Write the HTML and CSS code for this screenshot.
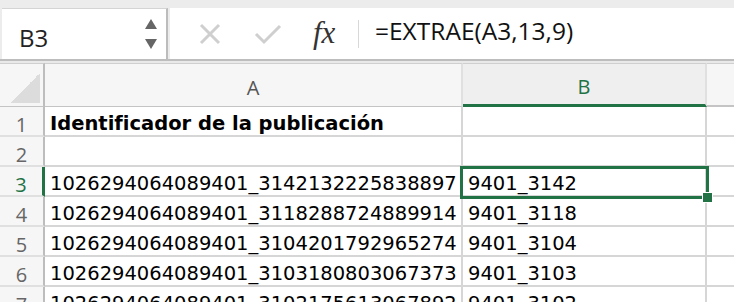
FILE: index.html
```html
<!DOCTYPE html>
<html lang="es">
<head>
    <meta charset="UTF-8">
    <title>EXTRAE</title>
    <link rel="stylesheet" href="styles.css">
</head>
<body>
    <div class="toolbar">
        <div class="name-box">
            <span class="cell-ref">B3</span>
            <div class="spinner">
                <svg width="14" height="12" viewBox="0 0 14 12"><polygon points="7,1 13,11 1,11" fill="#666"/></svg>
                <svg width="14" height="12" viewBox="0 0 14 12"><polygon points="1,1 13,1 7,11" fill="#666"/></svg>
            </div>
        </div>
        <div class="formula-bar">
            <div class="bar-icons">
                <svg class="icon-cancel" width="22" height="22" viewBox="0 0 22 22"><path d="M2 2 L20 20 M20 2 L2 20" stroke="#cfcfcf" stroke-width="3" fill="none"/></svg>
                <svg class="icon-ok" width="28" height="22" viewBox="0 0 28 22"><path d="M2 11 L10 19 L26 3" stroke="#cfcfcf" stroke-width="3" fill="none"/></svg>
                <span class="fx">fx</span>
            </div>
            <div class="formula">=EXTRAE(A3,13,9)</div>
        </div>
    </div>

    <div class="sheet">
        <div class="grid">
            <div class="corner"><span class="corner-tri"></span></div>
            <div class="col-head">A</div>
            <div class="col-head active">B</div>
            <div class="col-head rest"></div>

            <div class="row-head">1</div>
            <div class="cell bold">Identificador de la publicación</div>
            <div class="cell"></div>
            <div class="cell rest"></div>

            <div class="row-head">2</div>
            <div class="cell"></div>
            <div class="cell"></div>
            <div class="cell rest"></div>

            <div class="row-head active">3</div>
            <div class="cell">1026294064089401_3142132225838897</div>
            <div class="cell">9401_3142</div>
            <div class="cell rest"></div>

            <div class="row-head">4</div>
            <div class="cell">1026294064089401_3118288724889914</div>
            <div class="cell">9401_3118</div>
            <div class="cell rest"></div>

            <div class="row-head">5</div>
            <div class="cell">1026294064089401_3104201792965274</div>
            <div class="cell">9401_3104</div>
            <div class="cell rest"></div>

            <div class="row-head">6</div>
            <div class="cell">1026294064089401_3103180803067373</div>
            <div class="cell">9401_3103</div>
            <div class="cell rest"></div>

            <div class="row-head">7</div>
            <div class="cell">1026294064089401_3102175613067892</div>
            <div class="cell">9401_3102</div>
            <div class="cell rest"></div>
        </div>
        <div class="selection"><span class="handle"></span></div>
    </div>
</body>
</html>
```

FILE: styles.css
```css
body {
    margin: 0;
    width: 734px;
    height: 302px;
    overflow: hidden;
    background-color: #fff;
    font-family: 'Open Sans', 'Liberation Sans', sans-serif;
}
.toolbar {
    display: flex;
    height: 51px;
    padding-top: 8px;
    background-color: #ececec;
    border-bottom: 2px solid #bdbdbd;
}
.name-box {
    width: 166px;
    margin-left: 2px;
    display: flex;
    align-items: center;
    justify-content: space-between;
    background-color: #fff;
    border-top: 1px solid #d4d4d4;
    border-right: 2px solid #bcbcbc;
    box-sizing: border-box;
}
.cell-ref {
    font-size: 24px;
    color: #222;
    padding-left: 17px;
    padding-top: 6px;
}
.spinner {
    display: flex;
    flex-direction: column;
    gap: 8px;
    padding-right: 8px;
}
.spinner svg {
    display: block;
}
.formula-bar {
    flex: 1;
    display: flex;
    align-items: center;
    margin-left: 2px;
    background-color: #fff;
}
.bar-icons {
    display: flex;
    align-items: center;
    width: 189px;
    height: 28px;
    border-right: 1px solid #d8d8d8;
    box-sizing: border-box;
}
.icon-cancel {
    margin-left: 29px;
}
.icon-ok {
    margin-left: 33px;
}
.fx {
    margin-left: 31px;
    font-family: 'Liberation Serif', 'DejaVu Serif', serif;
    font-style: italic;
    font-size: 31px;
    color: #333;
    margin-top: -2px;
}
.formula {
    padding-left: 16px;
    font-size: 24.5px;
    color: #111;
    margin-top: -7px;
}
.sheet {
    position: relative;
    border-top: 2px solid #e9e9e9;
}
.grid {
    display: grid;
    grid-template-columns: 45px 418px 244px 27px;
    grid-template-rows: 44px repeat(7, 30px);
    height: 239px;
    overflow: hidden;
}
.corner, .col-head {
    background-color: #f6f6f6;
    border-top: 1px solid #cfcfcf;
    border-bottom: 1px solid #c4c4c4;
    box-sizing: border-box;
}
.corner {
    border-right: 2px solid #bdbdbd;
    position: relative;
}
.corner-tri {
    position: absolute;
    left: 10px;
    top: 9px;
    width: 30px;
    height: 30px;
    background: linear-gradient(to top left, #dcdcdc 50%, transparent 50%);
}
.col-head {
    display: flex;
    align-items: center;
    justify-content: center;
    font-size: 20px;
    color: #555;
    border-right: 2px solid #e0e0e0;
    padding-top: 4px;
}
.col-head.active {
    background-color: #efefef;
    color: #217346;
    border-bottom: 3px solid #217346;
}
.col-head.rest {
    border-right: none;
    border-bottom: 2px solid #c4c4c4;
}
.row-head {
    display: flex;
    align-items: center;
    justify-content: center;
    background-color: #f6f6f6;
    border-right: 2px solid #bdbdbd;
    border-bottom: 2px solid #e0e0e0;
    box-sizing: border-box;
    font-size: 20px;
    color: #666;
    padding-top: 6px;
}
.row-head.active {
    color: #217346;
    border-right: 3px solid #217346;
}
.cell {
    display: flex;
    align-items: center;
    padding-left: 5px;
    padding-top: 5px;
    border-right: 2px solid #d6d6d6;
    border-bottom: 2px solid #d6d6d6;
    box-sizing: border-box;
    font-family: 'DejaVu Sans', Verdana, sans-serif;
    font-size: 19.5px;
    color: #000;
    white-space: nowrap;
    overflow: hidden;
}
.cell.bold {
    font-weight: bold;
}
.cell.rest {
    border-right: none;
}
.selection {
    position: absolute;
    left: 460px;
    top: 103px;
    width: 249px;
    height: 33px;
    border: 3px solid #217346;
    box-sizing: border-box;
}
.handle {
    position: absolute;
    right: -7px;
    bottom: -7px;
    width: 9px;
    height: 9px;
    background-color: #217346;
    border: 1px solid #fff;
}
```
